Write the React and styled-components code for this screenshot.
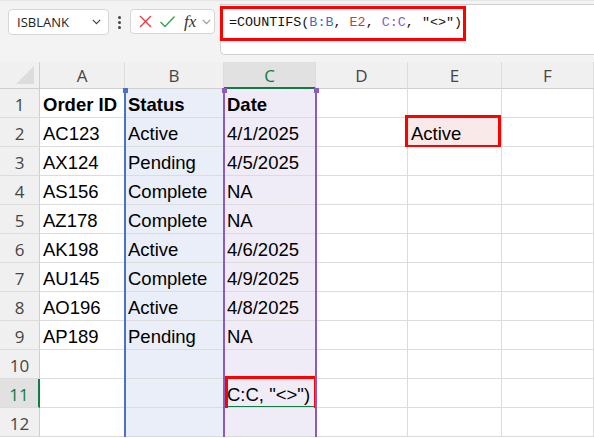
import React from "react";
import styled, { createGlobalStyle, css } from "styled-components";

const Global = createGlobalStyle`
  html, body { margin: 0; padding: 0; background: #ffffff; }
  body { width: 594px; height: 438px; overflow: hidden; font-family: "Liberation Sans", Arial, sans-serif; }
  * { box-sizing: border-box; }
`;

const Page = styled.div`
  width: 594px;
  height: 438px;
  overflow: hidden;
  background: #fff;
`;

const Toolbar = styled.div`
  height: 62px;
  background: #f3f3f3;
  display: flex;
  align-items: flex-start;
  padding-top: 3px;
  border-top: 1px solid #e6e6e6;
`;

const NameBox = styled.div`
  margin: 5px 0 0 8px;
  width: 101px;
  height: 26px;
  background: #fff;
  border: 1px solid #d6d6d6;
  border-radius: 4px;
  display: flex;
  align-items: center;
  justify-content: space-between;
  padding: 0 7px 0 8px;
  font-family: "Open Sans", "Liberation Sans", sans-serif;
  font-size: 13px;
  color: #222;
`;

const Dots = styled.div`
  width: 21px;
  height: 26px;
  margin-top: 5px;
  display: flex;
  flex-direction: column;
  align-items: center;
  justify-content: center;
  gap: 2px;
  span {
    width: 3px;
    height: 3px;
    border-radius: 50%;
    background: #444;
  }
`;

const FxBox = styled.div`
  margin-top: 5px;
  width: 85px;
  height: 25px;
  background: #fff;
  border: 1px solid #d6d6d6;
  border-radius: 4px;
  display: flex;
  align-items: center;
  padding-left: 7px;
  gap: 6px;
`;

const FxText = styled.span`
  font-family: "Liberation Serif", "DejaVu Serif", serif;
  font-style: italic;
  font-size: 17px;
  color: #333;
  margin-left: 2px;
  line-height: 1;
`;

const FormulaBox = styled.div`
  margin-left: 5px;
  flex: 1;
  height: 51px;
  background: #fff;
  border-top: 1px solid #d0d0d0;
  border-left: 1px solid #d0d0d0;
  border-bottom: 1px solid #d0d0d0;
  border-bottom-left-radius: 5px;
  padding-top: 1px;
`;

const FormulaText = styled.div`
  display: inline-block;
  width: 246px;
  height: 35px;
  margin-left: -1px;
  border: 3px solid #ff0000;
  padding: 6px 0 0 6px;
  font-family: "Liberation Mono", "DejaVu Sans Mono", monospace;
  font-size: 13.4px;
  color: #111;
  white-space: pre;
`;

const Ref = styled.span`
  color: ${(p) => p.$c};
`;

const Sheet = styled.div`
  display: grid;
  grid-template-columns: 40px 85px 99px 92px 92px 94px 92px;
  grid-template-rows: 27px repeat(12, 29px);
  background: #fff;
`;

const ColHead = styled.div`
  background: ${(p) => (p.$active ? "#e1e1e1" : "#f0f0f0")};
  border-right: 1px solid #dcdcdc;
  border-bottom: ${(p) => (p.$active ? "2px solid #107c41" : "1px solid #cfcfcf")};
  color: ${(p) => (p.$active ? "#107c41" : "#454545")};
  font-family: "Open Sans", "Liberation Sans", sans-serif;
  font-size: 17px;
  display: flex;
  align-items: center;
  justify-content: center;
  padding-top: ${(p) => (p.$active ? "1px" : "0")};
`;

const Corner = styled.div`
  background: #f0f0f0;
  border-right: 1px solid #cfcfcf;
  border-bottom: 1px solid #cfcfcf;
  position: relative;
  &::after {
    content: "";
    position: absolute;
    right: 5px;
    bottom: 4px;
    width: 0;
    height: 0;
    border-left: 18px solid transparent;
    border-bottom: 18px solid #dcdcdc;
  }
`;

const RowHead = styled.div`
  background: ${(p) => (p.$active ? "#e1e1e1" : "#f0f0f0")};
  border-right: ${(p) => (p.$active ? "2px solid #107c41" : "1px solid #cfcfcf")};
  border-bottom: 1px solid #dcdcdc;
  color: ${(p) => (p.$active ? "#107c41" : "#454545")};
  font-family: "Open Sans", "Liberation Sans", sans-serif;
  font-size: 17px;
  display: flex;
  align-items: center;
  justify-content: center;
  padding-top: 2px;
`;

const fills = {
  B: "#e9eef8",
  C: "#f0ecf7",
  E2: "#f9e9e9",
};

const Cell = styled.div`
  position: relative;
  background: ${(p) => p.$fill || "#fff"};
  border-right: 1px solid #dcdcdc;
  border-bottom: 1px solid #dcdcdc;
  font-family: "Liberation Sans", Arial, sans-serif;
  font-size: 18.5px;
  font-weight: ${(p) => (p.$bold ? 700 : 400)};
  color: #000;
  display: flex;
  align-items: center;
  padding: 3px 0 0 3px;
  white-space: nowrap;
  ${(p) =>
    p.$mark &&
    css`
      &::after {
        content: "";
        position: absolute;
        border: 3px solid #ff0000;
        top: ${p.$mark[0]}px;
        right: ${p.$mark[1]}px;
        bottom: ${p.$mark[2]}px;
        left: ${p.$mark[3]}px;
        pointer-events: none;
      }
    `}
  ${(p) =>
    p.$editing &&
    css`
      &::before {
        content: "";
        position: absolute;
        inset: -1px 0 0 -1px;
        border: 1px solid #107c41;
      }
    `}
`;

const SheetWrap = styled.div`
  position: relative;
`;

const RangeLine = styled.div`
  position: absolute;
  top: 27px;
  bottom: 0;
  width: 2px;
  background: ${(p) => p.$color};
`;

const Handle = styled.div`
  position: absolute;
  top: 26px;
  width: 5px;
  height: 5px;
  background: ${(p) => p.$color};
`;

const CloseIcon = () => (
  <svg width="15" height="15" viewBox="0 0 15 15">
    <path d="M2 2 L13 13 M13 2 L2 13" stroke="#e8383d" strokeWidth="1.3" fill="none" />
  </svg>
);

const CheckIcon = () => (
  <svg width="17" height="15" viewBox="0 0 17 15">
    <path d="M1.5 8 L6 12.5 L15.5 2.5" stroke="#2ea44f" strokeWidth="1.3" fill="none" />
  </svg>
);

const Chevron = ({ color = "#555" }) => (
  <svg width="9" height="6" viewBox="0 0 9 6">
    <path d="M0.8 0.8 L4.5 4.6 L8.2 0.8" stroke={color} strokeWidth="1.2" fill="none" />
  </svg>
);

const cols = ["A", "B", "C", "D", "E", "F"];

const data = [
  ["Order ID", "Status", "Date"],
  ["AC123", "Active", "4/1/2025"],
  ["AX124", "Pending", "4/5/2025"],
  ["AS156", "Complete", "NA"],
  ["AZ178", "Complete", "NA"],
  ["AK198", "Active", "4/6/2025"],
  ["AU145", "Complete", "4/9/2025"],
  ["AO196", "Active", "4/8/2025"],
  ["AP189", "Pending", "NA"],
  ["", "", ""],
  ["", "", "C:C, \"<>\")"],
  ["", "", ""],
];

export default function App() {
  return (
    <Page>
      <Global />
      <Toolbar>
        <NameBox>
          <span>ISBLANK</span>
          <Chevron color="#444" />
        </NameBox>
        <Dots>
          <span />
          <span />
          <span />
        </Dots>
        <FxBox>
          <CloseIcon />
          <CheckIcon />
          <FxText>fx</FxText>
          <Chevron color="#999" />
        </FxBox>
        <FormulaBox>
          <FormulaText>
            =COUNTIFS(<Ref $c="#3a6fc8">B:B</Ref>, <Ref $c="#d03a3a">E2</Ref>, <Ref $c="#8a5cc2">C:C</Ref>, "&lt;&gt;")
          </FormulaText>
        </FormulaBox>
      </Toolbar>
      <SheetWrap>
        <Sheet>
          <Corner />
          {cols.map((c) => (
            <ColHead key={c} $active={c === "C"}>
              {c}
            </ColHead>
          ))}
          {data.map((row, ri) => {
            const r = ri + 1;
            return (
              <React.Fragment key={r}>
                <RowHead $active={r === 11}>{r}</RowHead>
                {cols.map((c, ci) => {
                  let fill;
                  if (c === "B") fill = fills.B;
                  if (c === "C") fill = fills.C;
                  if (c === "E" && r === 2) fill = fills.E2;
                  let mark;
                  if (c === "E" && r === 2) mark = [-3, 0, -2, -3];
                  if (c === "C" && r === 11) mark = [-3, -2, -4, 1];
                  let text = ci < 3 ? row[ci] : "";
                  if (c === "E" && r === 2) text = "Active";
                  return (
                    <Cell
                      key={c}
                      $fill={fill}
                      $bold={r === 1}
                      $mark={mark}
                      $editing={c === "C" && r === 11}
                    >
                      {text}
                    </Cell>
                  );
                })}
              </React.Fragment>
            );
          })}
        </Sheet>
        <RangeLine $color="#4a72c6" style={{ left: "124px" }} />
        <RangeLine $color="#8a5cc2" style={{ left: "223px" }} />
        <RangeLine $color="#8a5cc2" style={{ left: "315px" }} />
        <Handle $color="#4a72c6" style={{ left: "123px" }} />
        <Handle $color="#8a5cc2" style={{ left: "222px" }} />
        <Handle $color="#8a5cc2" style={{ left: "314px" }} />
      </SheetWrap>
    </Page>
  );
}
